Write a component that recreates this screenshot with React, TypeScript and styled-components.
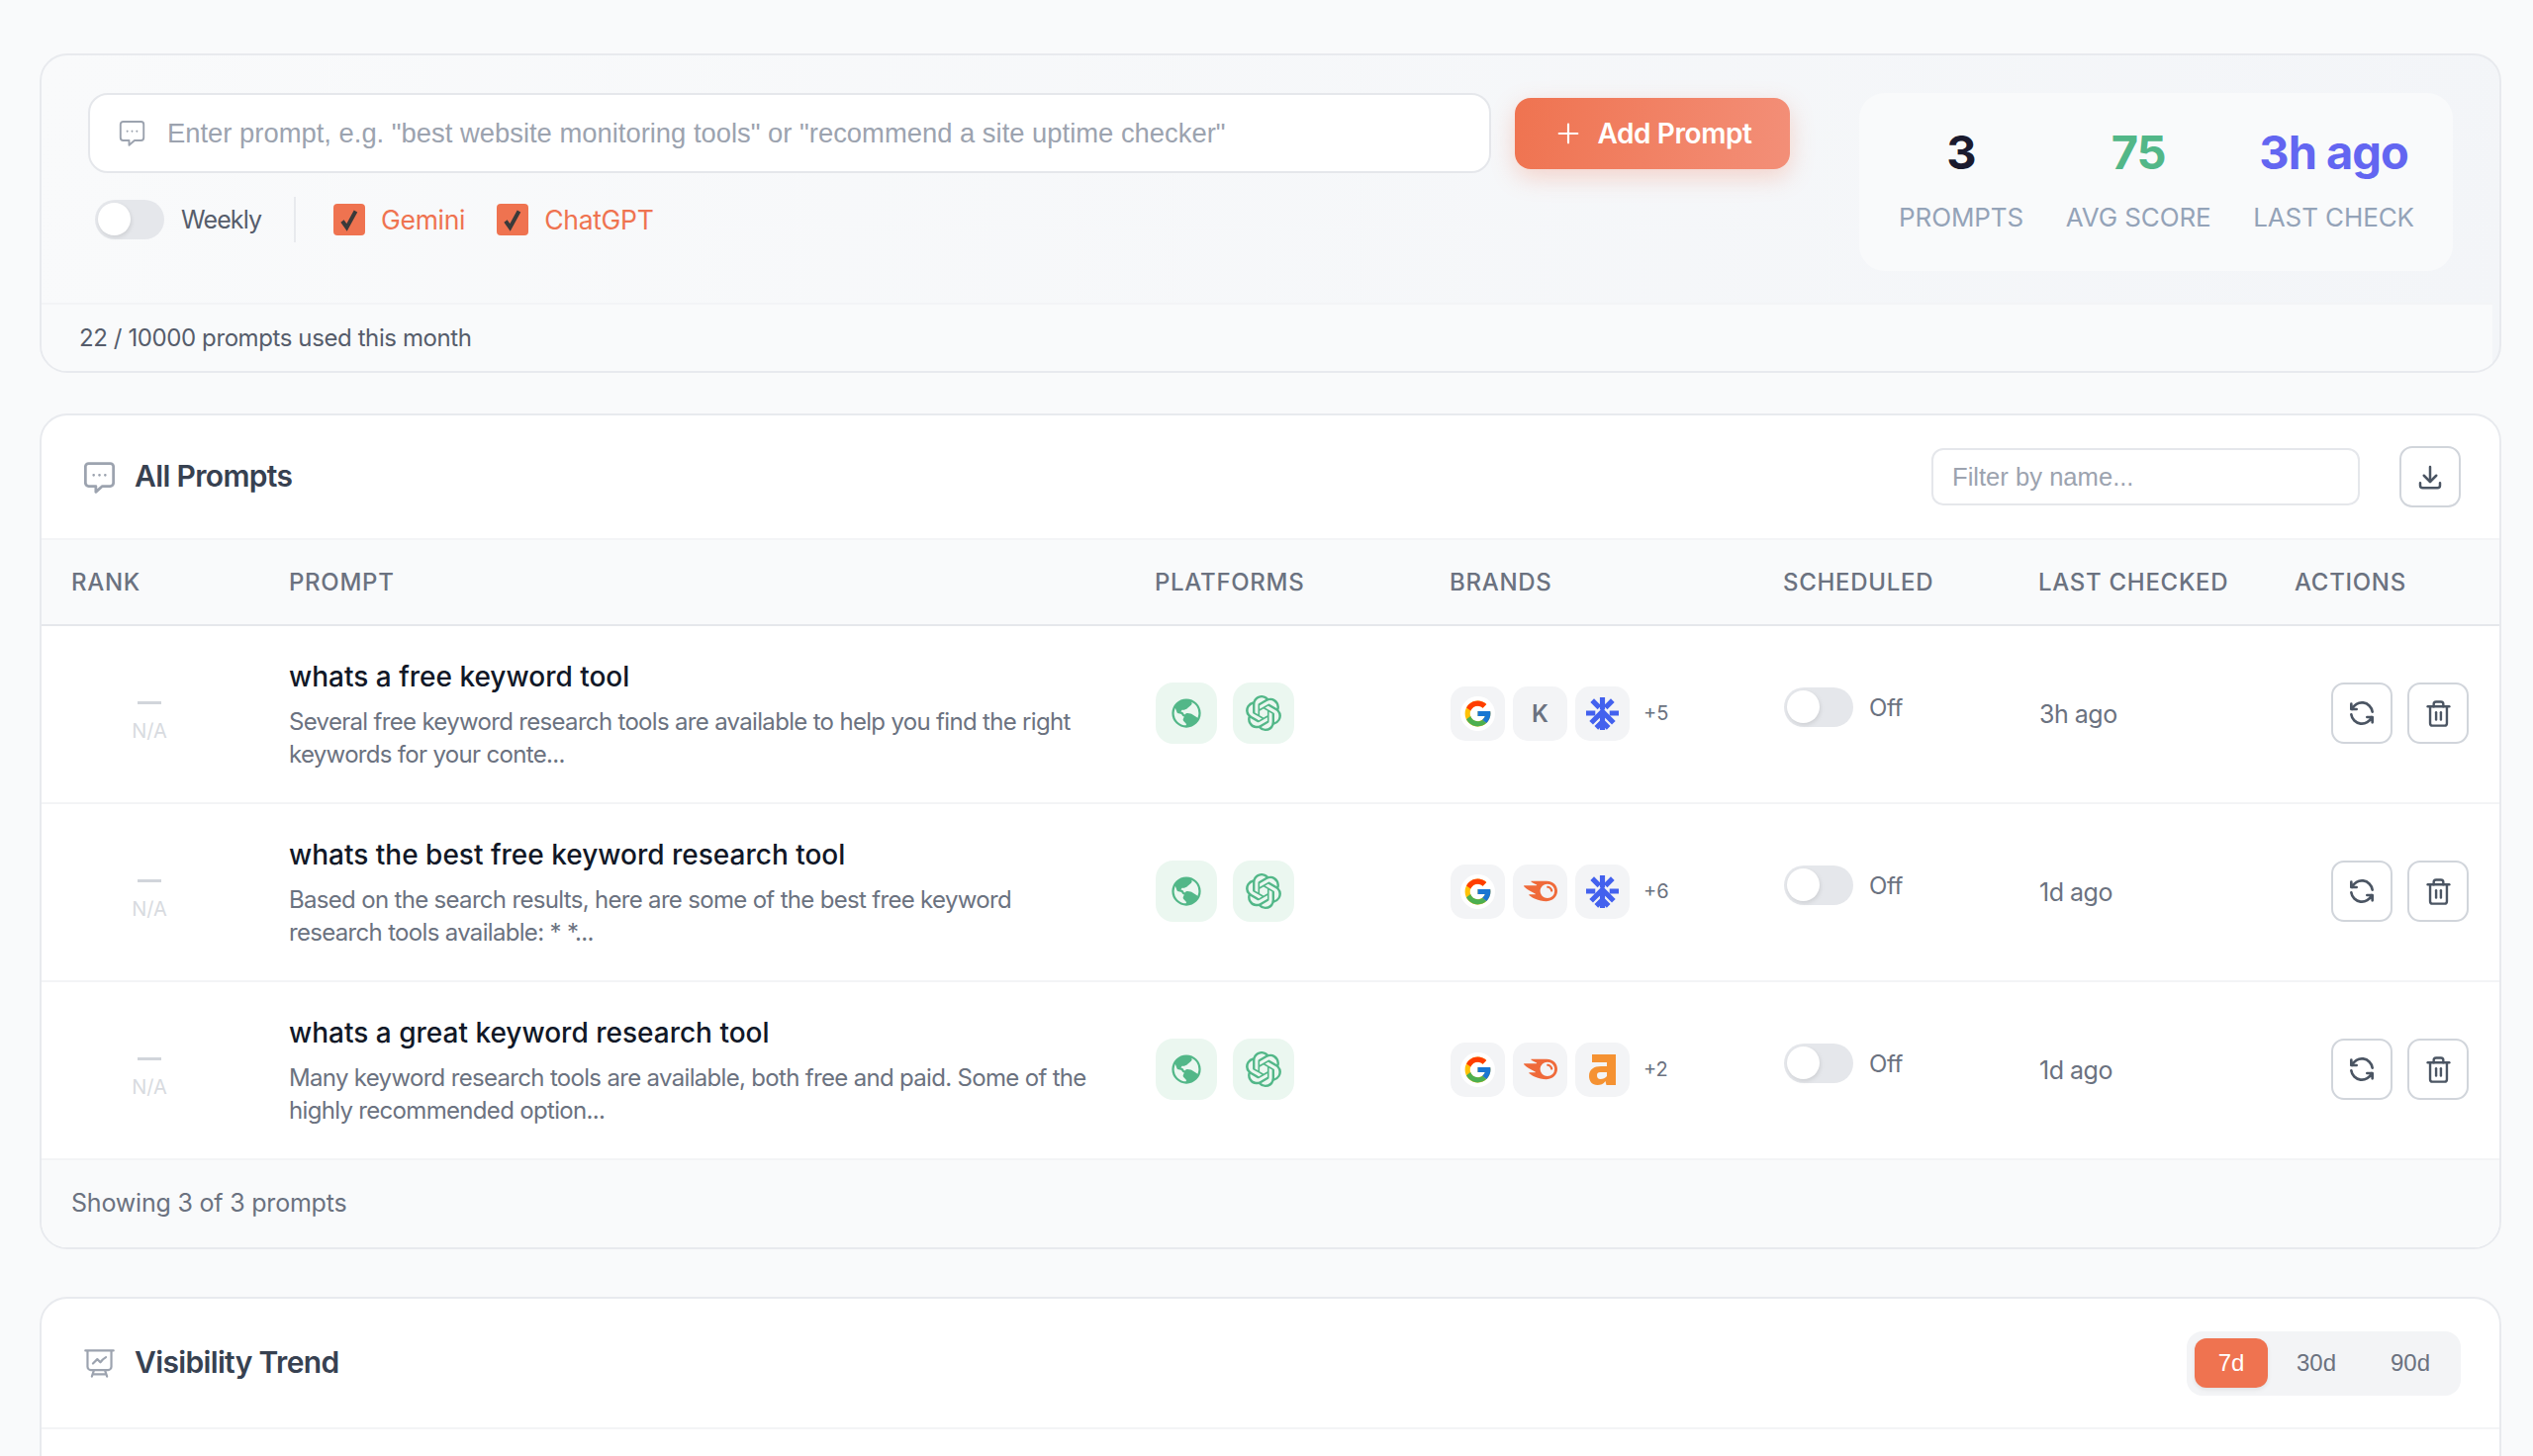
import React from "react";
import styled, { createGlobalStyle } from "styled-components";
import { Plus, Trash2 } from "lucide-react";
import { TbRefresh, TbDownload } from "react-icons/tb";
import { HiOutlinePresentationChartLine } from "react-icons/hi2";
import { PiGlobeHemisphereWestFill } from "react-icons/pi";
import { SiOpenai, SiSemrush } from "react-icons/si";
import { FcGoogle } from "react-icons/fc";

const UI = `Inter, "Noto Sans", sans-serif`;
const SYS = `"Liberation Sans", Arial, sans-serif`;
const COLUMNS = "218px 875px 298px 337px 258px 259px 1fr";

const Global = createGlobalStyle`
  html, body { margin: 0; padding: 0; background: #f9fafb; }
  body { font-family: ${UI}; overflow: hidden; }
  * { box-sizing: border-box; }
`;

const Page = styled.div`
  height: 1472px;
  overflow: hidden;
  padding: 54px 32px 0 40px;
  background: #f9fafb;
  display: flex;
  flex-direction: column;
`;

const ComposerCard = styled.section`
  flex: none;
  height: 323px;
  border: 2px solid #e8eaee;
  border-radius: 28px;
  background: linear-gradient(100deg, #f9fafb 0%, #f3f5f8 100%);
  overflow: hidden;
  display: flex;
  flex-direction: column;
`;

const ComposerTop = styled.div`
  height: 250px;
  padding: 38px 47px 0 47px;
  display: flex;
  justify-content: space-between;
  align-items: flex-start;
`;

const ComposerLeft = styled.div`
  width: 1720px;
  display: flex;
  flex-direction: column;
`;

const InputRow = styled.div`
  display: flex;
  align-items: center;
  gap: 24px;
`;

const PromptField = styled.div`
  width: 1418px;
  height: 81px;
  padding-left: 28px;
  display: flex;
  align-items: center;
  gap: 21px;
  background: #fff;
  border: 2px solid #e5e7eb;
  border-radius: 20px;
  color: #9ca3af;
`;

const PromptInput = styled.input`
  flex: 1;
  border: 0;
  outline: 0;
  padding: 0;
  background: transparent;
  font-family: ${SYS};
  font-size: 27.4px;
  color: #1f2937;
  &::placeholder { color: #9ca3af; opacity: 1; }
`;

const AddButton = styled.button`
  width: 278px;
  height: 72px;
  border: 0;
  border-radius: 16px;
  display: flex;
  align-items: center;
  justify-content: center;
  gap: 13px;
  background: linear-gradient(100deg, #ef7350 0%, #f38f78 100%);
  box-shadow: 0 8px 24px rgba(239, 115, 80, 0.28);
  color: #fff;
  font-family: ${UI};
  font-size: 28px;
  font-weight: 600;
  letter-spacing: -0.4px;
`;

const Controls = styled.div`
  margin: 24px 0 0 7px;
  height: 46px;
  display: flex;
  align-items: center;
`;

const Toggle = styled.span`
  flex: none;
  width: 70px;
  height: 40px;
  padding: 3px;
  border-radius: 20px;
  background: #e5e7eb;
  display: block;
`;

const Knob = styled.span`
  display: block;
  width: 33px;
  height: 33px;
  border-radius: 50%;
  background: #fff;
  box-shadow: 1px 2px 4px rgba(0, 0, 0, 0.1);
`;

const WeeklyLabel = styled.span`
  margin-left: 17px;
  font-size: 25px;
  color: #565d6b;
  letter-spacing: -0.9px;
`;

const Divider = styled.span`
  width: 2px;
  height: 46px;
  margin: 0 38px 0 33px;
  background: #e8eaee;
`;

const CheckItem = styled.label`
  display: flex;
  align-items: center;
  gap: 16px;
  margin-right: 32px;
  color: #ef7350;
  font-size: 26.5px;
  letter-spacing: -0.3px;
`;

const CheckBox = styled.span`
  width: 32px;
  height: 32px;
  border-radius: 4px;
  background: #ef7350;
  display: flex;
  align-items: center;
  justify-content: center;
`;

const Stats = styled.div`
  width: 600px;
  height: 180px;
  padding: 0 39px 8px 40px;
  border-radius: 26px;
  background: #f9fafb;
  display: flex;
  justify-content: space-between;
  align-items: center;
`;

const Stat = styled.div`
  display: flex;
  flex-direction: column;
  align-items: center;
  gap: 23px;
`;

const StatValue = styled.div<{ $color: string }>`
  font-size: 47px;
  line-height: 56px;
  font-weight: 700;
  letter-spacing: -1px;
  color: ${(p) => p.$color};
`;

const StatLabel = styled.div`
  font-size: 26px;
  line-height: 30px;
  color: #94a3b8;
  letter-spacing: -0.1px;
  white-space: nowrap;
`;

const UsageBar = styled.div`
  flex: 1;
  margin-right: 7px;
  padding-left: 38px;
  display: flex;
  align-items: center;
  background: #f9fafb;
  border-top: 2px solid #f3f4f6;
  font-size: 24px;
  letter-spacing: -0.4px;
  color: #565d6b;
`;

const Card = styled.section<{ $top: number }>`
  flex: none;
  margin-top: ${(p) => p.$top}px;
  background: #fff;
  border: 2px solid #e8eaee;
  border-radius: 28px;
  overflow: hidden;
`;

const CardHeader = styled.header<{ $height: number }>`
  height: ${(p) => p.$height}px;
  padding: 0 39px 0 41px;
  display: flex;
  align-items: center;
`;

const IconSlot = styled.span`
  flex: none;
  color: #9ca3af;
  display: flex;
  margin-right: 18px;
`;

const CardTitle = styled.h2`
  flex: 1;
  margin: 0 0 2px;
  font-size: 30px;
  font-weight: 600;
  letter-spacing: -0.65px;
  color: #374151;
`;

const FilterInput = styled.input`
  width: 433px;
  height: 58px;
  padding: 0 19px;
  border: 2px solid #e5e7eb;
  border-radius: 12px;
  outline: 0;
  background: #fff;
  font-family: ${SYS};
  font-size: 25.6px;
  &::placeholder { color: #9ca3af; opacity: 1; }
`;

const IconButton = styled.button<{ $ml?: number }>`
  flex: none;
  width: 62px;
  height: 62px;
  margin-left: ${(p) => p.$ml ?? 0}px;
  padding: 0;
  background: #fff;
  border: 2px solid #d1d5db;
  border-radius: 13px;
  color: #4b5563;
  display: flex;
  align-items: center;
  justify-content: center;
`;

const TableHead = styled.div`
  height: 89px;
  display: grid;
  grid-template-columns: ${COLUMNS};
  align-items: center;
  background: #f9fafb;
  border-bottom: 2px solid #e5e7eb;
  border-top: 2px solid #f3f4f6;
`;

const HeadCell = styled.div<{ $pad?: number }>`
  padding-left: ${(p) => p.$pad ?? 32}px;
  font-size: 24px;
  font-weight: 500;
  color: #6b7280;
  letter-spacing: 0.7px;
`;

const Row = styled.div`
  height: 180px;
  display: grid;
  grid-template-columns: ${COLUMNS};
  align-items: center;
  border-bottom: 2px solid #f3f4f6;
  &:last-of-type { border-bottom-color: #e5e7eb; height: 179px; }
`;

const RankCell = styled.div`
  padding-top: 16px;
  display: flex;
  flex-direction: column;
  align-items: center;
  color: #d8dbe0;
`;

const RankDash = styled.span`
  width: 24px;
  height: 3px;
  margin-bottom: 15px;
  background: #d1d5db;
`;

const RankNote = styled.span`
  font-size: 20px;
  line-height: 24px;
`;

const PromptCell = styled.div`
  padding: 0 32px;
`;

const PromptTitle = styled.div`
  font-size: 28px;
  line-height: 36px;
  font-weight: 500;
  letter-spacing: 0;
  color: #111827;
`;

const PromptBody = styled.div`
  margin-top: 11px;
  font-size: 24px;
  line-height: 33px;
  letter-spacing: -0.68px;
  white-space: nowrap;
  color: #6b7280;
`;

const PlatformCell = styled.div`
  padding-left: 33px;
  margin-bottom: 2px;
  display: flex;
  gap: 16px;
`;

const PlatformBadge = styled.span`
  width: 62px;
  height: 62px;
  border-radius: 18px;
  background: #ebf7f0;
  color: #52b788;
  display: flex;
  align-items: center;
  justify-content: center;
`;

const BrandCell = styled.div`
  padding-left: 33px;
  margin-bottom: 2px;
  display: flex;
  align-items: center;
  gap: 8px;
`;

const BrandBadge = styled.span`
  width: 55px;
  height: 55px;
  border-radius: 15px;
  background: #f3f4f6;
  color: #6b7280;
  font-size: 24px;
  font-weight: 600;
  display: flex;
  align-items: center;
  justify-content: center;
`;

const GoogleDisc = styled.span`
  width: 35px;
  height: 35px;
  border-radius: 50%;
  background: #fff;
  display: flex;
  align-items: center;
  justify-content: center;
`;

const BrandMore = styled.span`
  margin-left: 6px;
  font-size: 20px;
  color: #6b7280;
`;

const ScheduleCell = styled.div`
  padding-left: 33px;
  margin-top: -14px;
  display: flex;
  align-items: center;
  gap: 16px;
`;

const OffLabel = styled.span`
  font-size: 24px;
  color: #6b7280;
  letter-spacing: -0.4px;
`;

const LastChecked = styled.div`
  padding-left: 33px;
  font-size: 25px;
  letter-spacing: -0.5px;
  color: #6b7280;
`;

const ActionCell = styled.div`
  padding-right: 31px;
  margin-bottom: 2px;
  display: flex;
  justify-content: flex-end;
  gap: 15px;
`;

const TableFooter = styled.div`
  height: 88px;
  padding: 0 0 2px 30px;
  display: flex;
  align-items: center;
  background: #f9fafb;
  font-size: 25px;
  letter-spacing: -0.2px;
  color: #6b7280;
`;

const RangeTabs = styled.div`
  width: 277px;
  height: 65px;
  padding: 8px;
  border-radius: 16px;
  background: #f3f4f6;
  display: flex;
  align-items: center;
  gap: 3px;
`;

const RangeTab = styled.span<{ $active?: boolean }>`
  flex: none;
  width: ${(p) => (p.$active ? 74 : 92)}px;
  height: 50px;
  border-radius: 12px;
  display: flex;
  align-items: center;
  justify-content: center;
  font-family: ${SYS};
  font-size: 24px;
  color: ${(p) => (p.$active ? "#fff" : "#6b7280")};
  background: ${(p) => (p.$active ? "#ef7350" : "transparent")};
  box-shadow: ${(p) => (p.$active ? "0 2px 4px rgba(0,0,0,0.08)" : "none")};
`;

const TrendRule = styled.div`
  height: 200px;
  border-top: 2px solid #f3f4f6;
`;

function ChatIcon({ size = 32, strokeWidth = 2 }: { size?: number; strokeWidth?: number }) {
  return (
    <svg width={size} height={size} viewBox="0 0 24 24" fill="none" stroke="currentColor" strokeWidth={strokeWidth} strokeLinejoin="round">
      <path d="M4.500 2.500h15a2.200 2.200 0 0 1 2.200 2.200v11.300a2.200 2.200 0 0 1-2.200 2.200H14l-4.500 4v-4H4.500A2.200 2.200 0 0 1 2.300 16V4.700a2.200 2.200 0 0 1 2.200-2.200z" />
      <circle cx="8" cy="10.500" r="0.500" fill="currentColor" strokeWidth="0.800" />
      <circle cx="12" cy="10.500" r="0.500" fill="currentColor" strokeWidth="0.800" />
      <circle cx="16" cy="10.500" r="0.500" fill="currentColor" strokeWidth="0.800" />
    </svg>
  );
}

function CheckMark() {
  return (
    <svg width="24" height="24" viewBox="0 0 24 24" fill="none" stroke="#3a3a3a" strokeWidth="4" strokeLinejoin="miter">
      <path d="M5 13.500 9.500 20 18.500 3.500" />
    </svg>
  );
}

function SnowflakeLogo() {
  return (
    <svg width="33" height="33" viewBox="0 0 32 32" fill="none" stroke="#4361ee" strokeWidth="5">
      <path d="M16 0v12M6 3l7 7M26 3l-7 7M0 15.500h9M23 15.500h9" />
      <path d="M16 15v17M5 25l11-11 11 11M10 30l6-6 6 6" />
    </svg>
  );
}

function AmpLogo() {
  return (
    <svg width="27" height="31" viewBox="0 0 27 31">
      <path
        fill="#f59232"
        fillRule="evenodd"
        d="M3 0H27V31H17.500L16.500 27C14.500 30 11.500 31 8.500 31C3 31 0 27 0 22C0 15 5 12 12 12H18V8H3ZM18 18H11.500C9 18 8 19.200 8 21C8 23.500 9.200 25 11.500 25C14 25 16.500 24 18 22Z"
      />
    </svg>
  );
}

const Google = () => (
  <GoogleDisc>
    <FcGoogle size={31} />
  </GoogleDisc>
);

const Semrush = () => <SiSemrush size={34} color="#ef6a3a" />;

type PromptRow = {
  title: string;
  body: string[];
  brands: React.ReactNode[];
  more: string;
  checked: string;
};

const rows: PromptRow[] = [
  {
    title: "whats a free keyword tool",
    body: ["Several free keyword research tools are available to help you find the right", "keywords for your conte..."],
    brands: [<Google key="g" />, "K", <SnowflakeLogo key="s" />],
    more: "+5",
    checked: "3h ago",
  },
  {
    title: "whats the best free keyword research tool",
    body: ["Based on the search results, here are some of the best free keyword", "research tools available: * *..."],
    brands: [<Google key="g" />, <Semrush key="r" />, <SnowflakeLogo key="s" />],
    more: "+6",
    checked: "1d ago",
  },
  {
    title: "whats a great keyword research tool",
    body: ["Many keyword research tools are available, both free and paid. Some of the", "highly recommended option..."],
    brands: [<Google key="g" />, <Semrush key="r" />, <AmpLogo key="a" />],
    more: "+2",
    checked: "1d ago",
  },
];

export default function App() {
  return (
    <Page>
      <Global />
      <ComposerCard>
        <ComposerTop>
          <ComposerLeft>
            <InputRow>
              <PromptField>
                <ChatIcon size={29} strokeWidth={1.6} />
                <PromptInput placeholder={`Enter prompt, e.g. "best website monitoring tools" or "recommend a site uptime checker"`} />
              </PromptField>
              <AddButton>
                <Plus size={32} strokeWidth={1.6} />
                Add Prompt
              </AddButton>
            </InputRow>
            <Controls>
              <Toggle>
                <Knob />
              </Toggle>
              <WeeklyLabel>Weekly</WeeklyLabel>
              <Divider />
              <CheckItem>
                <CheckBox>
                  <CheckMark />
                </CheckBox>
                Gemini
              </CheckItem>
              <CheckItem>
                <CheckBox>
                  <CheckMark />
                </CheckBox>
                ChatGPT
              </CheckItem>
            </Controls>
          </ComposerLeft>
          <Stats>
            <Stat>
              <StatValue $color="#1a1a2e">3</StatValue>
              <StatLabel>PROMPTS</StatLabel>
            </Stat>
            <Stat>
              <StatValue $color="#52b788">75</StatValue>
              <StatLabel>AVG SCORE</StatLabel>
            </Stat>
            <Stat>
              <StatValue $color="#6366f1">3h ago</StatValue>
              <StatLabel>LAST CHECK</StatLabel>
            </Stat>
          </Stats>
        </ComposerTop>
        <UsageBar>22 / 10000 prompts used this month</UsageBar>
      </ComposerCard>

      <Card $top={41}>
        <CardHeader $height={124}>
          <IconSlot>
            <ChatIcon size={35} strokeWidth={1.9} />
          </IconSlot>
          <CardTitle>All Prompts</CardTitle>
          <FilterInput placeholder="Filter by name..." />
          <IconButton $ml={40}>
            <TbDownload size={30} />
          </IconButton>
        </CardHeader>
        <TableHead>
          <HeadCell $pad={30}>RANK</HeadCell>
          <HeadCell>PROMPT</HeadCell>
          <HeadCell>PLATFORMS</HeadCell>
          <HeadCell>BRANDS</HeadCell>
          <HeadCell>SCHEDULED</HeadCell>
          <HeadCell>LAST CHECKED</HeadCell>
          <HeadCell>ACTIONS</HeadCell>
        </TableHead>
        {rows.map((row) => (
          <Row key={row.title}>
            <RankCell>
              <RankDash />
              <RankNote>N/A</RankNote>
            </RankCell>
            <PromptCell>
              <PromptTitle>{row.title}</PromptTitle>
              <PromptBody>
                {row.body.map((line) => (
                  <div key={line}>{line}</div>
                ))}
              </PromptBody>
            </PromptCell>
            <PlatformCell>
              <PlatformBadge>
                <PiGlobeHemisphereWestFill size={36} />
              </PlatformBadge>
              <PlatformBadge>
                <SiOpenai size={36} />
              </PlatformBadge>
            </PlatformCell>
            <BrandCell>
              {row.brands.map((brand, i) => (
                <BrandBadge key={i}>{brand}</BrandBadge>
              ))}
              <BrandMore>{row.more}</BrandMore>
            </BrandCell>
            <ScheduleCell>
              <Toggle>
                <Knob />
              </Toggle>
              <OffLabel>Off</OffLabel>
            </ScheduleCell>
            <LastChecked>{row.checked}</LastChecked>
            <ActionCell>
              <IconButton>
                <TbRefresh size={32} />
              </IconButton>
              <IconButton>
                <Trash2 size={29} strokeWidth={2} />
              </IconButton>
            </ActionCell>
          </Row>
        ))}
        <TableFooter>Showing 3 of 3 prompts</TableFooter>
      </Card>

      <Card $top={48}>
        <CardHeader $height={130}>
          <IconSlot>
            <HiOutlinePresentationChartLine size={35} />
          </IconSlot>
          <CardTitle>Visibility Trend</CardTitle>
          <RangeTabs>
            <RangeTab $active>7d</RangeTab>
            <RangeTab>30d</RangeTab>
            <RangeTab>90d</RangeTab>
          </RangeTabs>
        </CardHeader>
        <TrendRule />
      </Card>
    </Page>
  );
}
